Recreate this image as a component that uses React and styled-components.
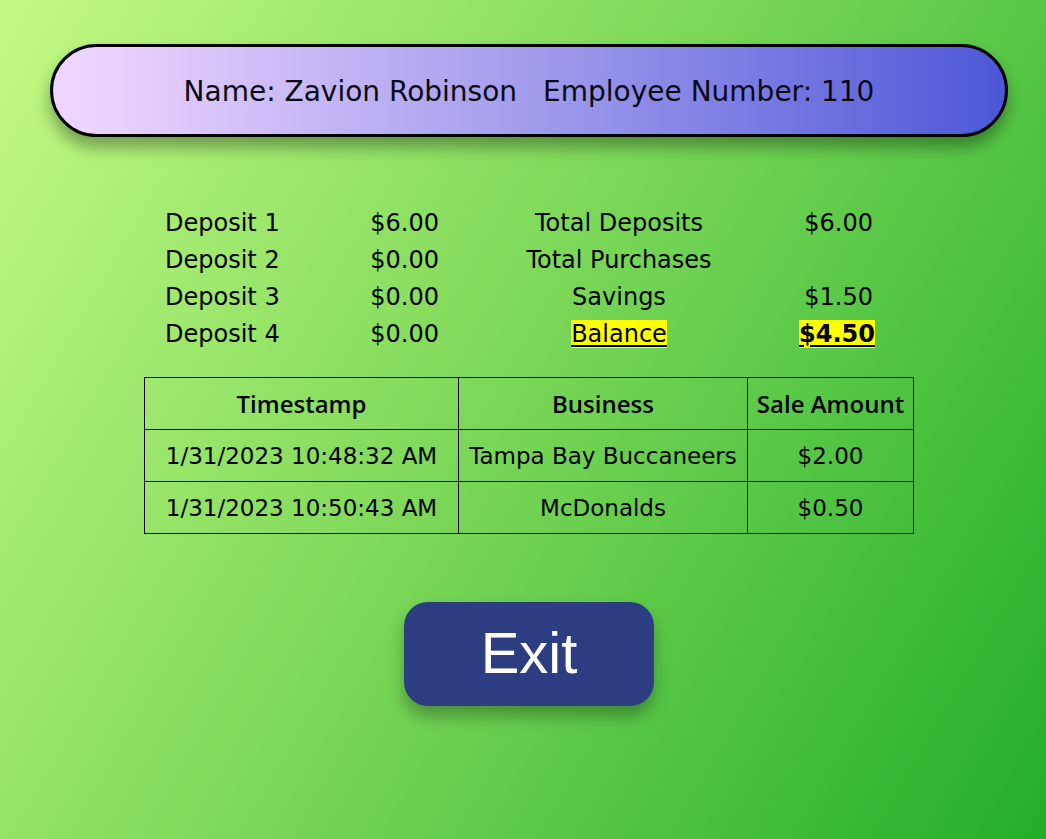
import React from "react";
import styled, { createGlobalStyle } from "styled-components";

const GlobalStyle = createGlobalStyle`
  html, body {
    margin: 0;
    padding: 0;
    height: 100%;
  }
  body {
    font-family: "DejaVu Sans", "Liberation Sans", sans-serif;
    color: #000;
  }
  #root {
    min-height: 100%;
  }
`;

const Page = styled.div`
  width: 1046px;
  height: 839px;
  box-sizing: border-box;
  padding: 44px 38px 0 50px;
  background: linear-gradient(120deg, #c4fa84 0%, #7fd95a 45%, #22ae2a 100%);
  overflow: hidden;
`;

const Content = styled.div`
  width: 958px;
  display: flex;
  flex-direction: column;
  align-items: center;
`;

const HeaderPill = styled.div`
  width: 100%;
  height: 93px;
  box-sizing: border-box;
  padding-top: 2px;
  border: 3px solid #000;
  border-radius: 47px;
  background: linear-gradient(90deg, #eed5ff 3%, #a29cec 50%, #4d57d7 100%);
  box-shadow: 0 10px 16px rgba(0, 0, 0, 0.35);
  display: flex;
  align-items: center;
  justify-content: center;
  gap: 26px;
  font-size: 28px;
  color: #0a0a14;
`;

const Summary = styled.div`
  align-self: flex-start;
  margin-left: 115px;
  margin-top: 67px;
  display: grid;
  grid-template-columns: 150px 124px 360px 74px;
  grid-auto-rows: 37px;
  align-items: center;
  font-size: 24px;
`;

const Cell = styled.div`
  text-align: ${(p) => p.$align || "left"};
  white-space: nowrap;
`;

const Highlight = styled.span`
  background: #ffff00;
  text-decoration: underline;
  text-underline-offset: 3px;
  text-decoration-thickness: 2px;
  font-weight: ${(p) => (p.$bold ? 700 : 400)};
`;

const Table = styled.table`
  align-self: flex-start;
  margin-left: 94px;
  margin-top: 25px;
  width: 769px;
  table-layout: fixed;
  border-collapse: collapse;
  font-size: 23px;
`;

const Col = styled.col`
  width: ${(p) => p.$w}px;
`;

const Th = styled.th`
  border: 1px solid #000;
  height: 51px;
  padding: 0;
  font-family: "Open Sans", "Liberation Sans", sans-serif;
  font-size: 24px;
  font-weight: 600;
  text-align: center;
  white-space: nowrap;
`;

const Td = styled.td`
  border: 1px solid #000;
  height: 51px;
  padding: 0;
  text-align: center;
  white-space: nowrap;
`;

const ExitButton = styled.button`
  margin-top: 68px;
  width: 250px;
  height: 104px;
  padding: 0 0 4px;
  border: none;
  border-radius: 24px;
  background: #2c3d82;
  color: #fff;
  font-family: "Liberation Sans", Arial, sans-serif;
  font-size: 58px;
  box-shadow: 0 10px 16px rgba(0, 0, 0, 0.3);
  cursor: pointer;
`;

const rows = [
  ["Deposit 1", "$6.00", "Total Deposits", "$6.00"],
  ["Deposit 2", "$0.00", "Total Purchases", ""],
  ["Deposit 3", "$0.00", "Savings", "$1.50"],
];

const sales = [
  ["1/31/2023 10:48:32 AM", "Tampa Bay Buccaneers", "$2.00"],
  ["1/31/2023 10:50:43 AM", "McDonalds", "$0.50"],
];

export default function App() {
  return (
    <>
      <GlobalStyle />
      <Page>
        <Content>
          <HeaderPill>
            <span>Name: Zavion Robinson</span>
            <span>Employee Number: 110</span>
          </HeaderPill>
          <Summary>
            {rows.map((r) => (
              <React.Fragment key={r[0]}>
                <Cell>{r[0]}</Cell>
                <Cell $align="right">{r[1]}</Cell>
                <Cell $align="center">{r[2]}</Cell>
                <Cell $align="right">{r[3]}</Cell>
              </React.Fragment>
            ))}
            <Cell>Deposit 4</Cell>
            <Cell $align="right">$0.00</Cell>
            <Cell $align="center">
              <Highlight>Balance</Highlight>
            </Cell>
            <Cell $align="right">
              <Highlight $bold>$4.50</Highlight>
            </Cell>
          </Summary>
          <Table>
            <colgroup>
              <Col $w={314} />
              <Col $w={289} />
              <Col $w={166} />
            </colgroup>
            <thead>
              <tr>
                <Th>Timestamp</Th>
                <Th>Business</Th>
                <Th>Sale Amount</Th>
              </tr>
            </thead>
            <tbody>
              {sales.map((s) => (
                <tr key={s[0]}>
                  <Td>{s[0]}</Td>
                  <Td>{s[1]}</Td>
                  <Td>{s[2]}</Td>
                </tr>
              ))}
            </tbody>
          </Table>
          <ExitButton>Exit</ExitButton>
        </Content>
      </Page>
    </>
  );
}
